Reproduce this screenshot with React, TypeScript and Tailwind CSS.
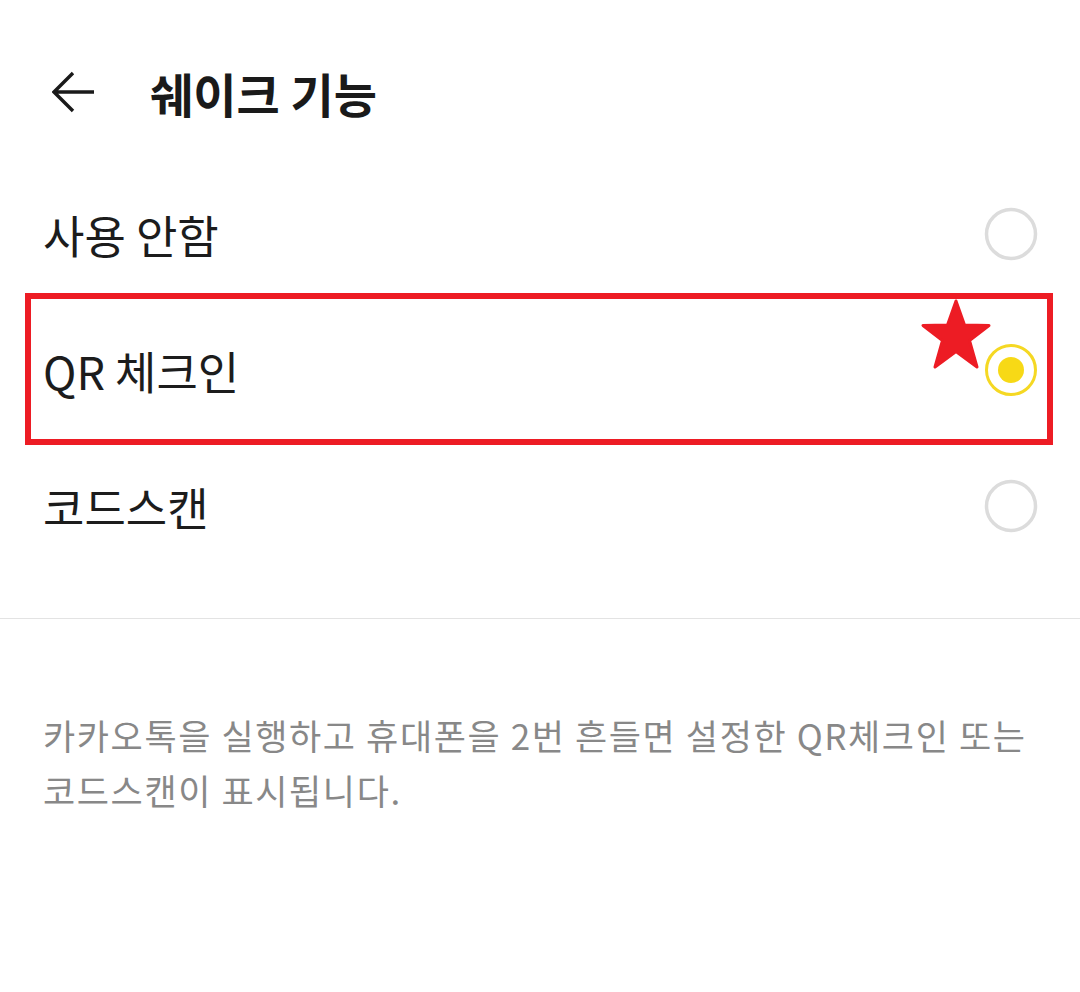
import React from "react";

const font = { fontFamily: '"Noto Sans CJK KR", "Noto Sans", sans-serif' };

function Radio({ selected }: { selected?: boolean }) {
  return (
    <svg width="54" height="54" viewBox="0 0 54 54">
      {selected ? (
        <>
          <circle cx="27" cy="27" r="24.5" fill="none" stroke="#f5d823" strokeWidth="3" />
          <circle cx="27" cy="27" r="13" fill="#f7d916" />
        </>
      ) : (
        <circle cx="27" cy="27" r="24.5" fill="none" stroke="#dcdcdc" strokeWidth="3.5" />
      )}
    </svg>
  );
}

function Row({ label, selected }: { label: string; selected?: boolean }) {
  return (
    <div className="flex h-[136px] items-center justify-between pl-[43px] pr-[42px]">
      <span className="text-[45px] leading-none text-[#1c1c1c]">{label}</span>
      <Radio selected={selected} />
    </div>
  );
}

export default function App() {
  return (
    <div className="relative w-[1080px] h-[992px] bg-white overflow-hidden" style={font}>
      <div className="flex h-[166px] items-center pt-[18px] pl-[52px]">
        <svg width="44" height="42" viewBox="0 0 44 42" className="shrink-0">
          <path d="M42 21H3M21 2L2 21l19 19" fill="none" stroke="#1a1a1a" strokeWidth="3.4" strokeLinecap="butt" strokeLinejoin="miter" />
        </svg>
        <span className="ml-[54px] text-[47px] font-bold leading-none text-[#1a1a1a]">쉐이크 기능</span>
      </div>
      <Row label="사용 안함" />
      <Row label="QR 체크인" selected />
      <Row label="코드스캔" />
      <div className="mt-[44px] h-px bg-[#e3e3e3]" />
      <p className="pt-[88px] pl-[43px] text-[35px] leading-[55px] tracking-[1.6px] text-[#888888] whitespace-nowrap">
        카카오톡을 실행하고 휴대폰을 2번 흔들면 설정한 QR체크인 또는
        <br />
        코드스캔이 표시됩니다.
      </p>
      <div className="absolute left-[25px] top-[293px] w-[1028px] h-[152px] border-[6px] border-[#ed1c24]" />
      <svg className="absolute left-[919px] top-[298px]" width="74" height="76" viewBox="0 0 74 76">
        <path
          d="M37 3 L45.5 27 L70 27.5 L50.5 42.5 L58 69 L37 53.5 L16 69 L23.5 42.5 L4 27.5 L28.5 27 Z"
          fill="#ed1c24"
          stroke="#ed1c24"
          strokeWidth="3"
          strokeLinejoin="round"
        />
      </svg>
    </div>
  );
}
